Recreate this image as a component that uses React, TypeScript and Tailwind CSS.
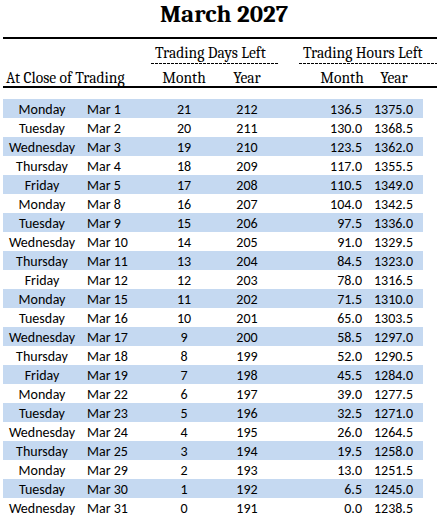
import React from 'react'

const rows: [string, string][] = [
    ['Monday', 'Mar 1'], ['Tuesday', 'Mar 2'], ['Wednesday', 'Mar 3'], ['Thursday', 'Mar 4'],
    ['Friday', 'Mar 5'], ['Monday', 'Mar 8'], ['Tuesday', 'Mar 9'], ['Wednesday', 'Mar 10'],
    ['Thursday', 'Mar 11'], ['Friday', 'Mar 12'], ['Monday', 'Mar 15'], ['Tuesday', 'Mar 16'],
    ['Wednesday', 'Mar 17'], ['Thursday', 'Mar 18'], ['Friday', 'Mar 19'], ['Monday', 'Mar 22'],
    ['Tuesday', 'Mar 23'], ['Wednesday', 'Mar 24'], ['Thursday', 'Mar 25'], ['Monday', 'Mar 29'],
    ['Tuesday', 'Mar 30'], ['Wednesday', 'Mar 31'],
]

const body = "font-['Carlito','Lato',sans-serif] text-[14px]"
const serif = "font-['Caladea','Liberation_Serif',serif]"
const dash = "h-px bg-[repeating-linear-gradient(to_right,#000_0_3px,transparent_3px_4px)]"

const App = () => {
    return (
        <div className="w-[448px] h-[522px] bg-white text-black overflow-hidden">
            <div className={`h-[37px] pt-[1px] text-center ${serif} font-bold text-[25px] leading-[26px]`}>
                March 2027
            </div>
            <div className="ml-[3px] w-[434px] h-[2px] bg-black" />
            <div className={`ml-[3px] w-[434px] ${serif} text-[15.5px]`}>
                <div className="flex h-[25px] items-end">
                    <div className="w-[148px]" />
                    <div className="w-[127px] flex flex-col">
                        <span className="pl-[4px] leading-[20px]">Trading Days Left</span>
                        <div className={dash} />
                    </div>
                    <div className="w-[21px]" />
                    <div className="w-[138px] flex flex-col">
                        <span className="pl-[4px] leading-[20px] whitespace-nowrap">Trading Hours Left</span>
                        <div className={dash} />
                    </div>
                </div>
                <div className="flex h-[22px] pt-[6px] leading-[16px]">
                    <div className="w-[148px] pl-[3px] whitespace-nowrap">At Close of Trading</div>
                    <div className="w-[66px] text-center">Month</div>
                    <div className="w-[60px] text-center">Year</div>
                    <div className="w-[33px]" />
                    <div className="w-[64px] text-center">Month</div>
                    <div className="w-[40px] text-center">Year</div>
                </div>
            </div>
            <div className="ml-[3px] w-[434px] h-[2px] bg-black" />
            <div className={`mt-[11px] ml-[3px] w-[420px] ${body}`}>
                {rows.map(([day, date], i) => (
                    <div key={date} className={`flex h-[19px] pt-[3px] leading-[16px] ${i % 2 === 0 ? 'bg-[#c5d9f1]' : ''}`}>
                        <div className="w-[78px] text-center">{day}</div>
                        <div className="w-[70px] pl-[6px]">{date}</div>
                        <div className="w-[66px] text-center">{21 - i}</div>
                        <div className="w-[60px] text-center">{212 - i}</div>
                        <div className="w-[85px] text-right">{(136.5 - 6.5 * i).toFixed(1)}</div>
                        <div className="w-[51px] text-right">{(1375 - 6.5 * i).toFixed(1)}</div>
                    </div>
                ))}
            </div>
        </div>
    )
}

export default App
